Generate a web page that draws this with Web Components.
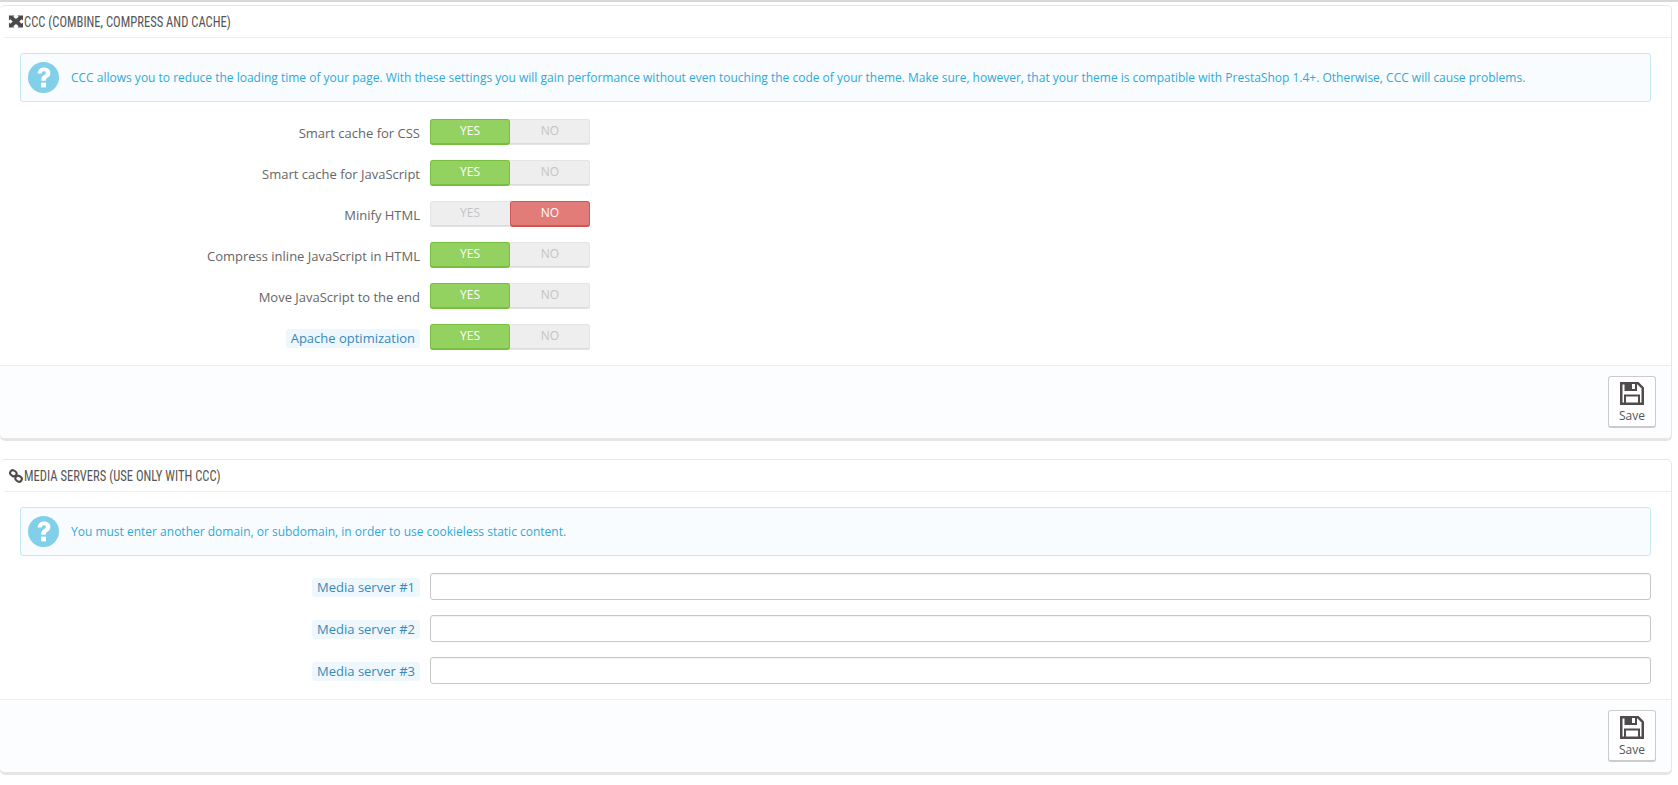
<!DOCTYPE html>
<html lang="en">
  <head>
    <meta charset="UTF-8" />
    <title>Performance</title>
    <style>
      html, body {
        margin: 0;
        padding: 0;
        background: #fff;
      }
      body {
        font-family: "Open Sans", sans-serif;
        font-size: 12px;
        color: #666;
        overflow: hidden;
      }
      .topline {
        height: 2px;
        background: #d8d8d8;
        margin-bottom: 3px;
      }
      .page {
        width: 1672px;
      }
    </style>
  </head>
  <body>
    <template id="t-panel">
      <style>
        :host {
          display: block;
          background: #fff;
          border: 1px solid #e6e6e6;
          border-left: 0;
          border-radius: 5px;
          box-shadow: 0 2px 0 rgba(0, 0, 0, 0.1);
          margin-bottom: 20px;
        }
        .heading {
          display: flex;
          align-items: center;
          gap: 1px;
          height: 31px;
          margin-left: 4px;
          padding-left: 4px;
          border-bottom: 1px solid #eee;
          font-family: "Liberation Sans Narrow", "Roboto Condensed", sans-serif;
          font-size: 15px;
          color: #555;
          text-transform: uppercase;
          white-space: nowrap;
        }
        ::slotted(span) {
          display: inline-block;
          transform: scaleX(0.84);
          transform-origin: left center;
        }
        .body {
          padding: 15px 20px 0;
        }
        .footer {
          display: flex;
          justify-content: flex-end;
          margin-top: 15px;
          padding: 10px 15px 10px 0;
          background: #fcfdfe;
          border-top: 1px solid #eee;
          border-radius: 0 0 5px 5px;
        }
      </style>
      <div class="heading"><slot name="icon"></slot><slot name="title"></slot></div>
      <div class="body"><slot></slot></div>
      <div class="footer"><slot name="footer"></slot></div>
    </template>

    <template id="t-alert">
      <style>
        :host {
          display: flex;
          align-items: center;
          gap: 12px;
          height: 47px;
          padding-left: 7px;
          margin-bottom: 17px;
          background: #f8fcfe;
          border: 1px solid #c5e9f3;
          border-radius: 3px;
          color: #2eaad6;
          font-size: 12px;
        }
        svg {
          flex: none;
          width: 31px;
          height: 31px;
        }
      </style>
      <svg viewBox="0 0 31 31">
        <circle cx="15.5" cy="15.5" r="15.5" fill="#81cfe8" />
        <path d="M9.6 11.6C10 7.6 12.6 5.600 16 5.600c3.800 0 6.400 2.300 6.400 5.400 0 2.600-1.500 3.800-3 4.800-1.100.8-1.500 1.200-1.500 2.400v.6h-4.600v-1c0-2.300.9-3.400 2.500-4.500 1.200-.8 2-1.300 2-2.400 0-1-.8-1.700-1.900-1.700-1.200 0-2 .8-2.200 2.300z" fill="#fff" />
        <rect x="13.2" y="20.6" width="4.8" height="4.8" fill="#fff" />
      </svg>
      <span><slot></slot></span>
    </template>

    <template id="t-row">
      <style>
        :host {
          display: grid;
          grid-template-columns: 400px 1fr;
          column-gap: 10px;
          align-items: center;
          margin-bottom: var(--row-gap, 15px);
        }
        .label {
          justify-self: end;
          margin-top: 2px;
          font-size: 13px;
          line-height: 19px;
          color: #666;
          white-space: nowrap;
        }
        :host([hint]) .label {
          padding: 0 5px;
          background: #eef7fc;
          border-radius: 3px;
          color: #3a88b8;
        }
      </style>
      <div class="label"><slot name="label"></slot></div>
      <div><slot></slot></div>
    </template>

    <template id="t-switch">
      <style>
        :host {
          display: flex;
          width: 160px;
          height: 26px;
          box-sizing: border-box;
          background: #eee;
          border-radius: 3px;
          box-shadow: inset 0 0 0 1px #e4e4e4, inset 0 -2px 0 #dcdcdc;
          font-size: 12px;
          text-align: center;
          color: #c4c4c4;
        }
        span {
          flex: none;
          width: 80px;
          line-height: 23px;
          box-sizing: border-box;
          border-radius: 3px;
        }
        :host([value="yes"]) .yes {
          background: #93d160;
          border: 1px solid #79bf3e;
          border-bottom-width: 2px;
          line-height: 21px;
          color: #fff;
        }
        :host([value="no"]) .no {
          background: #e27c79;
          border: 1px solid #d35653;
          border-bottom-width: 2px;
          line-height: 21px;
          color: #fff;
        }
      </style>
      <span class="yes">YES</span><span class="no">NO</span>
    </template>

    <template id="t-save">
      <style>
        :host {
          display: flex;
          flex-direction: column;
          align-items: center;
          box-sizing: border-box;
          width: 48px;
          height: 52px;
          padding-top: 5px;
          background: #fff;
          border: 1px solid #ccc;
          border-bottom-width: 2px;
          border-radius: 3px;
          font-size: 12px;
          color: #555;
        }
        svg {
          width: 24px;
          height: 23px;
          flex: none;
        }
        span {
          line-height: 16px;
          margin-top: 3px;
        }
      </style>
      <svg viewBox="0 0 24 23">
        <path fill="#4f4a4c" d="M0 0H18.500L24 5.500V23H0z" />
        <path fill="#fff" d="M2.500 2.500H17.500L21.500 6.500V20.500H2.500z" />
        <path fill="#4f4a4c" d="M4.500 0H17V9H4.500z" />
        <path fill="#fff" d="M12 2h3v5h-3z" />
        <path fill="#4f4a4c" d="M4 12.500H20V23H4z" />
        <path fill="#fff" d="M6 14.500H18V20.500H6z" />
      </svg>
      <span><slot></slot></span>
    </template>

    <template id="t-text-input">
      <style>
        :host {
          display: block;
        }
        input {
          display: block;
          box-sizing: border-box;
          width: 100%;
          height: 27px;
          padding: 0 8px;
          background: #fff;
          border: 1px solid #c7c7c7;
          border-radius: 3px;
          box-shadow: inset 0 1px 1px rgba(0, 0, 0, 0.05);
          outline: 0;
        }
      </style>
      <input type="text" />
    </template>

    <div class="topline"></div>
    <div class="page">
      <ps-panel>
        <svg slot="icon" width="15" height="13" viewBox="-1 0 16 13">
          <path fill="#4a4a4a" d="M0 0h6L4.600 1.400 7.500 3.800 10.400 1.400 9 0h6v5.500L13.600 4.200 11 6.500 13.600 8.800 15 7.500V13H9l1.400-1.400L7.500 9.200 4.600 11.600 6 13H0V7.500L1.400 8.800 4 6.500 1.400 4.200 0 5.500z" />
        </svg>
        <span slot="title">CCC (Combine, Compress and Cache)</span>
        <ps-alert>CCC allows you to reduce the loading time of your page. With these settings you will gain performance without even touching the code of your theme. Make sure, however, that your theme is compatible with PrestaShop 1.4+. Otherwise, CCC will cause problems.</ps-alert>
        <ps-row><span slot="label">Smart cache for CSS</span><ps-switch value="yes"></ps-switch></ps-row>
        <ps-row><span slot="label">Smart cache for JavaScript</span><ps-switch value="yes"></ps-switch></ps-row>
        <ps-row><span slot="label">Minify HTML</span><ps-switch value="no"></ps-switch></ps-row>
        <ps-row><span slot="label">Compress inline JavaScript in HTML</span><ps-switch value="yes"></ps-switch></ps-row>
        <ps-row><span slot="label">Move JavaScript to the end</span><ps-switch value="yes"></ps-switch></ps-row>
        <ps-row hint style="margin-bottom: 0"><span slot="label">Apache optimization</span><ps-switch value="yes"></ps-switch></ps-row>
        <ps-save slot="footer">Save</ps-save>
      </ps-panel>
      <ps-panel>
        <svg slot="icon" width="15" height="14" viewBox="-1 0 16 14">
          <g fill="none" stroke="#4a4a4a" stroke-width="2.200">
            <rect x="1.200" y="1.300" width="7" height="5.600" rx="2.800" transform="rotate(35 4.700 4.100)" />
            <rect x="6.800" y="7.100" width="7" height="5.600" rx="2.800" transform="rotate(35 10.300 9.900)" />
          </g>
        </svg>
        <span slot="title">Media servers (use only with CCC)</span>
        <ps-alert>You must enter another domain, or subdomain, in order to use cookieless static content.</ps-alert>
        <ps-row hint><span slot="label">Media server #1</span><ps-text-input></ps-text-input></ps-row>
        <ps-row hint><span slot="label">Media server #2</span><ps-text-input></ps-text-input></ps-row>
        <ps-row hint style="margin-bottom: 0"><span slot="label">Media server #3</span><ps-text-input></ps-text-input></ps-row>
        <ps-save slot="footer">Save</ps-save>
      </ps-panel>
    </div>
    <script>
      // every element here is just a template cloned into an open shadow root
      const fromTemplate = (tag, id) => {
        customElements.define(tag, class extends HTMLElement {
          constructor() {
            super();
            const shadowDOM = this.attachShadow({ mode: 'open' });
            shadowDOM.appendChild(
              document.querySelector(id).content.cloneNode(true)
            );
          }
        });
      };
      fromTemplate('ps-panel', '#t-panel');
      fromTemplate('ps-alert', '#t-alert');
      fromTemplate('ps-row', '#t-row');
      fromTemplate('ps-switch', '#t-switch');
      fromTemplate('ps-save', '#t-save');
      fromTemplate('ps-text-input', '#t-text-input');
    </script>
  </body>
</html>
